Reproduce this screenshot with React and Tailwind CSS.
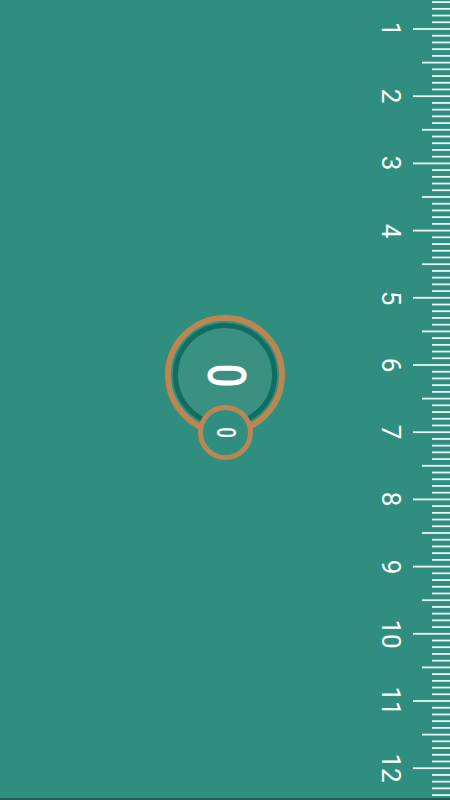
const CM = 67.2;
const FIRST = 29;

const ticks = [];
for (let k = 6; k <= 124; k++) {
  const y = FIRST + (k - 10) * (CM / 10);
  const x = k % 10 === 0 ? 413 : k % 5 === 0 ? 422 : 432;
  ticks.push({ k, y, x });
}

const labels = Array.from({ length: 12 }, (_, i) => i + 1);

function Ruler() {
  return (
    <div className="absolute right-0 top-0 h-[800px] w-[90px]">
      <svg className="absolute inset-0" width="90" height="800" viewBox="360 0 90 800">
        {ticks.map((t) => (
          <rect key={t.k} x={t.x} y={t.y - 0.9} width={450 - t.x} height="1.8" fill="#eef7f5" />
        ))}
      </svg>
      {labels.map((n) => (
        <span
          key={n}
          className="absolute left-[31px] flex h-[30px] w-[0px] items-center justify-center text-[26px] leading-none text-white"
          style={{ top: FIRST + (n - 1) * CM - 15 }}
        >
          <span className="inline-block rotate-90 whitespace-nowrap">{n}</span>
        </span>
      ))}
    </div>
  );
}

export default function App() {
  return (
    <div
      className="relative h-[800px] w-[450px] overflow-hidden bg-[#2f8e80]"
      style={{ fontFamily: "Roboto, 'Liberation Sans', sans-serif" }}
    >
      <div className="flex flex-col items-center pt-[315px]">
        <div className="flex h-[120px] w-[120px] items-center justify-center rounded-full border-[6px] border-[#bd8650] bg-[#2f8e80]">
          <div className="flex h-[104px] w-[104px] items-center justify-center rounded-full border-[5px] border-[#0f6d62] bg-[#3a9182]">
            <span className="inline-block rotate-90 scale-x-80 text-[53px] font-medium leading-none text-white">0</span>
          </div>
        </div>
        <div className="relative -mt-[30px] flex h-[55px] w-[55px] items-center justify-center rounded-full border-[5px] border-[#bd8650] bg-[#2f8e80]">
          <span className="inline-block rotate-90 scale-x-75 text-[25px] font-medium leading-none text-white">0</span>
        </div>
      </div>
      <Ruler />
      <div className="absolute bottom-0 left-0 h-[2px] w-full bg-[#1c5f56]" />
    </div>
  );
}
